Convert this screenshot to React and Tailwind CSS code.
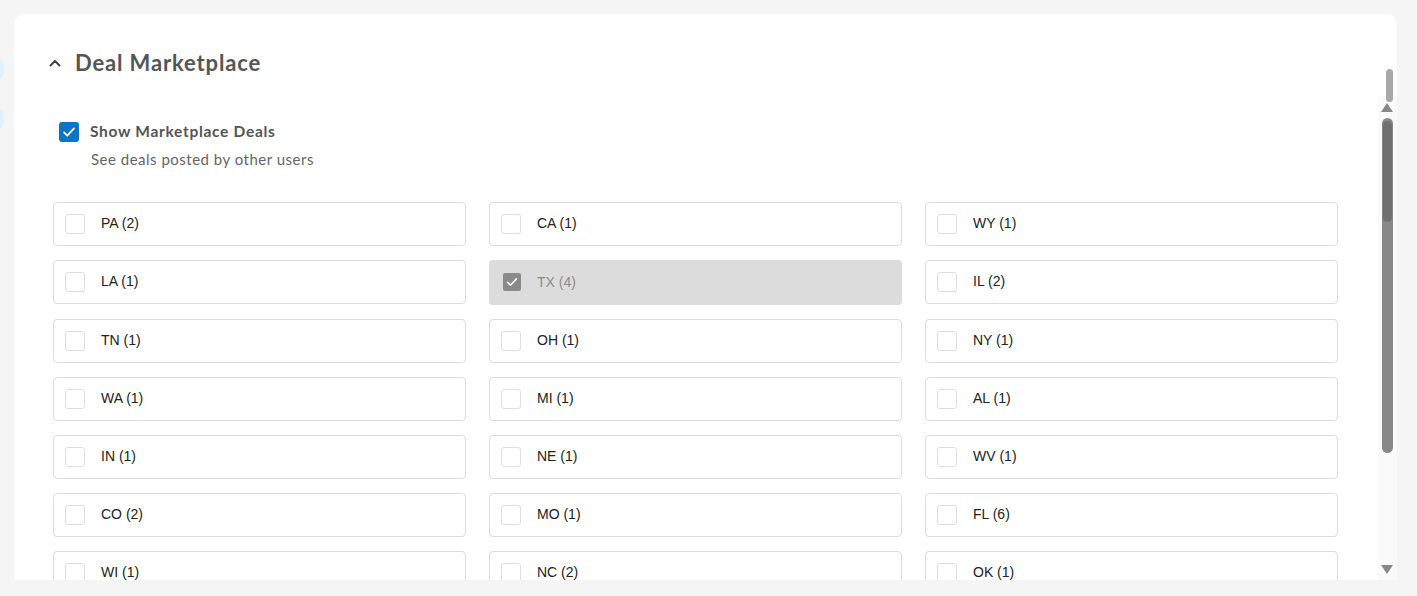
import React from "react";

const states = [
  ["PA (2)", "CA (1)", "WY (1)"],
  ["LA (1)", "TX (4)", "IL (2)"],
  ["TN (1)", "OH (1)", "NY (1)"],
  ["WA (1)", "MI (1)", "AL (1)"],
  ["IN (1)", "NE (1)", "WV (1)"],
  ["CO (2)", "MO (1)", "FL (6)"],
  ["WI (1)", "NC (2)", "OK (1)"],
];

const Check = ({ className }) => (
  <svg viewBox="0 0 20 20" className={className} fill="none">
    <path d="M4.5 10.5l3.6 3.6 7.4-8" stroke="white" strokeWidth="2" strokeLinecap="round" strokeLinejoin="round" />
  </svg>
);

const StateBox = ({ label, disabled }) => {
  if (disabled) {
    return (
      <div className="h-[45px] rounded-[4px] bg-[#dcdcdc] flex items-center px-[14px] gap-[16px]">
        <div className="w-[18px] h-[18px] rounded-[2px] bg-[#8a8a8a] flex items-center justify-center">
          <Check className="w-[16px] h-[16px]" />
        </div>
        <span className="text-[14px] text-[#8c8c8c]">{label}</span>
      </div>
    );
  }
  return (
    <div className="h-[44px] rounded-[4px] border border-[#dcdcdc] bg-white flex items-center px-[11px] gap-[16px]">
      <div className="w-[20px] h-[20px] rounded-[3px] border border-[#dedede]" />
      <span className="text-[14px] text-[#222]">{label}</span>
    </div>
  );
};

export default function App() {
  return (
    <div className="h-[596px] overflow-hidden bg-[#f5f5f5] pt-[14px] pl-[14px] pr-[20px] relative">
      <div className="absolute left-[-26px] top-[54px] w-[30px] h-[30px] rounded-full bg-[#dff1fd]" />
      <div className="absolute left-[-26px] top-[104px] w-[30px] h-[30px] rounded-full bg-[#dff1fd]" />

      <div className="relative h-[566px] rounded-t-[10px] bg-white overflow-hidden" style={{ fontFamily: "Lato, 'Open Sans', sans-serif" }}>
        <div className="flex items-center pl-[34px] pt-[36px] gap-[13px]">
          <svg viewBox="0 0 14 10" className="w-[14px] h-[10px]" fill="none">
            <path d="M2.5 7.5L7 3l4.5 4.5" stroke="#444" strokeWidth="2" strokeLinecap="round" strokeLinejoin="round" />
          </svg>
          <h2 className="text-[22px] font-bold text-[#555] leading-[26px] tracking-[0.85px]">Deal Marketplace</h2>
        </div>

        <div className="pl-[45px] pt-[44px]">
          <div className="flex items-center gap-[11px]">
            <div className="w-[20px] h-[20px] rounded-[3px] bg-[#0b74c4] flex items-center justify-center">
              <Check className="w-[18px] h-[18px]" />
            </div>
            <span className="text-[15.5px] font-bold text-[#555] tracking-[0.7px]">Show Marketplace Deals</span>
          </div>
          <p className="pl-[32px] pt-[5px] text-[15px] text-[#666] tracking-[0.5px]">See deals posted by other users</p>
        </div>

        <div
          className="grid grid-cols-3 gap-x-[23px] gap-y-[14px] pl-[39px] w-[1324px] pt-[31px]"
          style={{ fontFamily: "'Liberation Sans', Arial, sans-serif" }}
        >
          {states.flat().map((s) => (
            <StateBox key={s} label={s} disabled={s === "TX (4)"} />
          ))}
        </div>

        {/* scrollbar */}
        <div className="absolute left-[1364px] top-[83px] bottom-0 w-[19px] bg-[#fafafa]" />
        <div className="absolute left-[1372px] top-[55px] w-[7px] h-[33px] rounded-full bg-[#a8a8a8]" />
        <div className="absolute left-[1367px] top-[89px] w-0 h-0 border-l-[6px] border-r-[6px] border-b-[9px] border-l-transparent border-r-transparent border-b-[#888]" />
        <div className="absolute left-[1368px] top-[104px] w-[11px] h-[335px] rounded-full bg-[#888]">
          <div className="mx-auto mt-[3px] w-[9px] h-[101px] rounded-full bg-[#707070]" />
        </div>
        <div className="absolute left-[1367px] top-[551px] w-0 h-0 border-l-[6px] border-r-[6px] border-t-[9px] border-l-transparent border-r-transparent border-t-[#888]" />
      </div>
    </div>
  );
}
